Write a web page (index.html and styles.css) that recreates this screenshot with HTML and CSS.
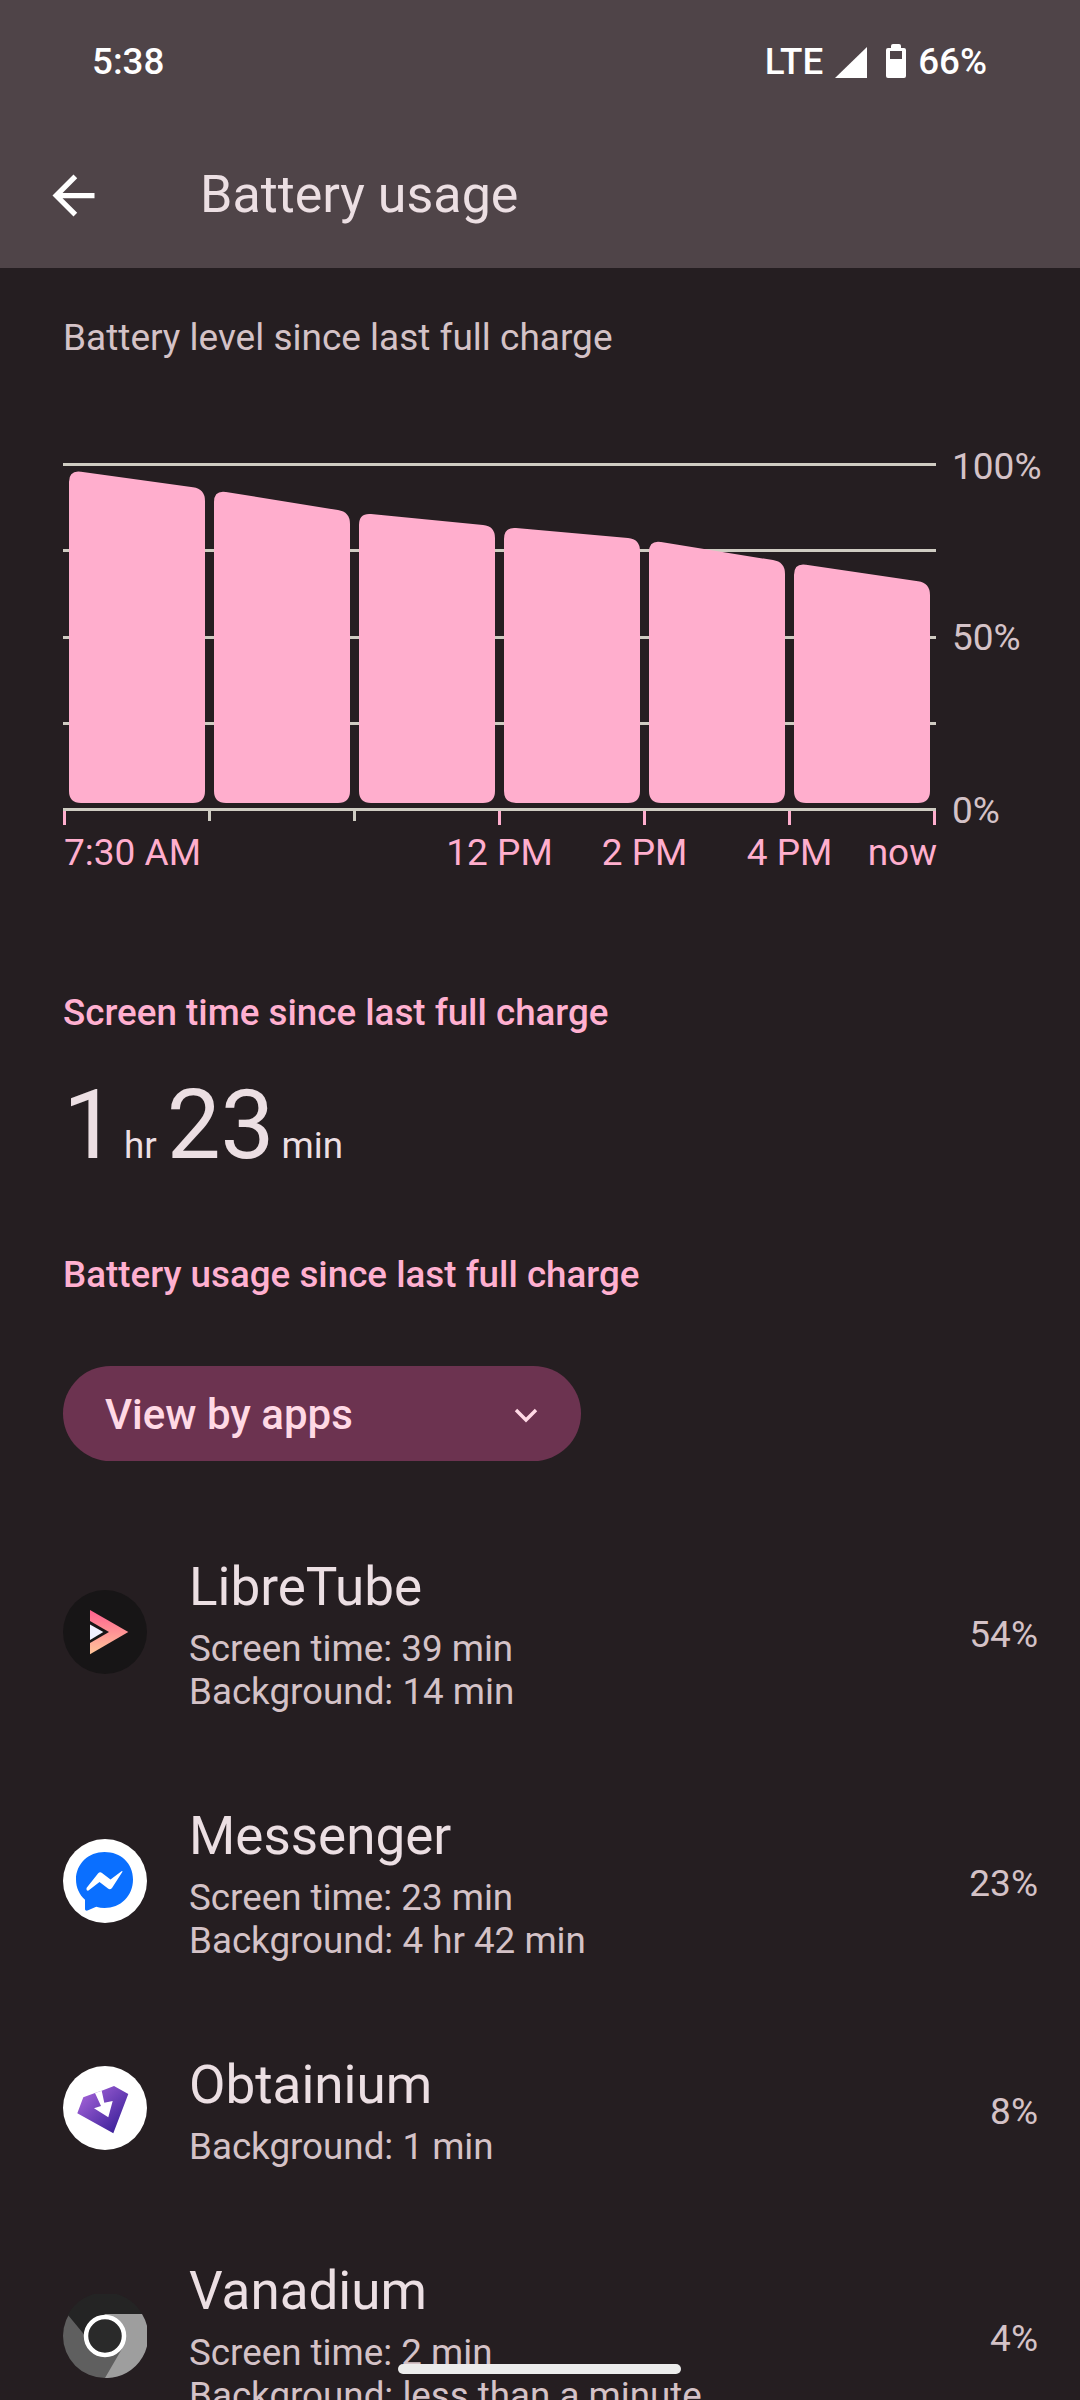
FILE: index.html
```html
<!DOCTYPE html>
<html>
  <head>
    <title>Battery usage</title>
    <link rel="stylesheet" href="styles.css">
  </head>
  <body>
    <header class="top">
      <div class="status">
        <span class="clock">5:38</span>
        <div class="status-right">
          <span>LTE</span>
          <svg class="signal" width="32" height="31" viewBox="0 0 32 31"><polygon points="0,31 32,0 32,31" fill="#fff"/></svg>
          <svg class="batt" width="20" height="34" viewBox="0 0 20 34"><path fill="#fff" fill-rule="evenodd" d="M5 2q0-2 2-2h6q2 0 2 2v2h3q2 0 2 2v26q0 2-2 2H2q-2 0-2-2V6q0-2 2-2h3zM4 7v8h12V7z"/></svg>
          <span>66%</span>
        </div>
      </div>
      <div class="toolbar">
        <svg class="back" width="63" height="63" viewBox="0 0 24 24"><path fill="#fff" d="M20 11H7.83l5.59-5.59L12 4l-8 8 8 8 1.41-1.41L7.83 13H20v-2z"/></svg>
        <h1>Battery usage</h1>
      </div>
    </header>

    <p class="chart-title">Battery level since last full charge</p>

    <!-- chart is a free canvas, 1080 wide, top at y=440 in the page -->
    <svg class="chart" width="1080" height="440" viewBox="0 440 1080 440">
      <g class="grid">
        <rect x="63" y="463" width="873" height="3"/>
        <rect x="63" y="549" width="873" height="3"/>
        <rect x="63" y="636" width="873" height="3"/>
        <rect x="63" y="722" width="873" height="3"/>
        <rect x="63" y="808" width="873" height="3"/>
        <rect x="208" y="808" width="3" height="13"/>
        <rect x="353" y="808" width="3" height="13"/>
      </g>
      <g class="ticks">
        <rect x="63" y="811" width="3" height="14"/>
        <rect x="498" y="811" width="3" height="14"/>
        <rect x="643" y="811" width="3" height="14"/>
        <rect x="788" y="811" width="3" height="14"/>
        <rect x="933" y="811" width="3" height="14"/>
      </g>
      <g class="bars">
        <path d="M69 482Q69 470 81 471.7L193 487.3Q205 489 205 501V791Q205 803 193 803H81Q69 803 69 791Z"/>
        <path d="M214 502Q214 490 226 491.9L338 510.1Q350 512 350 524V791Q350 803 338 803H226Q214 803 214 791Z"/>
        <path d="M359 525Q359 513 371 514.1L483 524.9Q495 526 495 538V791Q495 803 483 803H371Q359 803 359 791Z"/>
        <path d="M504 539Q504 527 516 528.1L628 537.9Q640 539 640 551V791Q640 803 628 803H516Q504 803 504 791Z"/>
        <path d="M649 552Q649 540 661 541.9L773 560.1Q785 562 785 574V791Q785 803 773 803H661Q649 803 649 791Z"/>
        <path d="M794 575Q794 563 806 564.8L918 581.2Q930 583 930 595V791Q930 803 918 803H806Q794 803 794 791Z"/>
      </g>
      <g class="y-labels">
        <text x="952" y="479">100%</text>
        <text x="952" y="650">50%</text>
        <text x="952" y="823">0%</text>
      </g>
      <g class="x-labels">
        <text x="64" y="865">7:30 AM</text>
        <text x="499.5" y="865" text-anchor="middle">12 PM</text>
        <text x="644.5" y="865" text-anchor="middle">2 PM</text>
        <text x="789.5" y="865" text-anchor="middle">4 PM</text>
        <text x="937" y="865" text-anchor="end">now</text>
      </g>
    </svg>

    <h2 class="section screen-head">Screen time since last full charge</h2>
    <div class="total">
      <span class="big">1</span><span class="unit">hr</span><span class="big">23</span><span class="unit">min</span>
    </div>

    <h2 class="section usage-head">Battery usage since last full charge</h2>

    <div class="pill">
      <span>View by apps</span>
      <svg width="24" height="16" viewBox="0 0 24 16"><path d="M2 3l10 10L22 3" fill="none" stroke="#ffd9e5" stroke-width="3.4"/></svg>
    </div>

    <ul class="apps">
      <li class="app">
        <svg class="icon" width="84" height="84" viewBox="0 0 84 84">
          <defs>
            <linearGradient id="lt" x1="0" y1="0" x2="0" y2="1">
              <stop offset="0" stop-color="#ff5f8f"/>
              <stop offset="1" stop-color="#ffc79a"/>
            </linearGradient>
          </defs>
          <circle cx="42" cy="42" r="42" fill="#171516"/>
          <polygon points="27,20 65.300,42 27,64.300" fill="url(#lt)"/>
          <polygon points="27,31 46,42 27,53" fill="#171516"/>
          <polygon points="27,34.500 40.300,42 27,50" fill="#f1f0ff"/>
        </svg>
        <div class="app-text">
          <div class="app-name">LibreTube</div>
          <div class="app-sub">Screen time: 39 min</div>
          <div class="app-sub">Background: 14 min</div>
        </div>
        <span class="pct">54%</span>
      </li>
      <li class="app">
        <svg class="icon" width="84" height="84" viewBox="0 0 84 84">
          <circle cx="42" cy="42" r="42" fill="#fff"/>
          <path fill="#0a6fff" d="M41.500 13C25.500 13 13 24.800 13 40.500c0 8.200 3.400 15.300 9 20.200V70c0 1.300 1.300 2.100 2.500 1.600l8.700-3.800c2.600.8 5.400 1.200 8.300 1.200 16 0 28.500-11.800 28.500-28.500S57.500 13 41.500 13z"/>
          <path fill="#fff" d="M23.500 49L35 34.500q1.800-2 4-.6L47.500 40.500L58.500 32.300q1.400-.7.8.8L49 49q-1.800 2-4 .6L36.500 43L25.500 51.500q-2.500.8-2-2.500z"/>
        </svg>
        <div class="app-text">
          <div class="app-name">Messenger</div>
          <div class="app-sub">Screen time: 23 min</div>
          <div class="app-sub">Background: 4 hr 42 min</div>
        </div>
        <span class="pct">23%</span>
      </li>
      <li class="app">
        <svg class="icon" width="84" height="84" viewBox="0 0 84 84">
          <defs>
            <linearGradient id="ob" x1="0" y1="0" x2="1" y2="1">
              <stop offset="0.1" stop-color="#a463d8"/>
              <stop offset="1" stop-color="#2b1690"/>
            </linearGradient>
          </defs>
          <circle cx="42" cy="42" r="42" fill="#fff"/>
          <polygon points="14.300,47.300 20.300,31.300 32,27 38.700,24.700 51,20 65.300,28 50.300,67.300" fill="url(#ob)"/>
          <polygon points="32,27 38.700,24.700 41.300,36.700 49.700,35 45.300,51.300 31,42.300 38,40" fill="#fff"/>
        </svg>
        <div class="app-text">
          <div class="app-name">Obtainium</div>
          <div class="app-sub">Background: 1 min</div>
        </div>
        <span class="pct">8%</span>
      </li>
      <li class="app">
        <svg class="icon" width="84" height="84" viewBox="0 0 84 84">
          <circle cx="42" cy="42" r="42" fill="#5f5f5f"/>
          <path fill="#9e9e9e" d="M42 20H79A42 42 0 0 1 42 84L60 53z"/>
          <path fill="#242424" d="M5 21A42 42 0 0 1 79 20H42L30 30L24 44z"/>
          <circle cx="42" cy="42" r="19" fill="#2a2a2a" stroke="#fff" stroke-width="4.500"/>
        </svg>
        <div class="app-text">
          <div class="app-name">Vanadium</div>
          <div class="app-sub">Screen time: 2 min</div>
          <div class="app-sub">Background: less than a minute</div>
        </div>
        <span class="pct">4%</span>
      </li>
    </ul>

    <div class="home-bar"></div>
  </body>
</html>
```

FILE: styles.css
```css
html, body {
  margin: 0;
  padding: 0;
}
body {
  position: relative;
  width: 1080px;
  height: 2400px;
  overflow: hidden;
  background: #251e21;
  color: #ecdfe3;
  font-family: Roboto, "Noto Sans", sans-serif;
}
h1, h2, p, ul {
  margin: 0;
  padding: 0;
  font-weight: 400;
}

/**** top bar ****/
.top {
  height: 268px;
  background: #4f4448;
}
.status {
  display: flex;
  justify-content: space-between;
  align-items: center;
  height: 122px;
  padding: 0 93px 0 92px;
  color: #fff;
  font-size: 36.75px;
  font-weight: 500;
}
.status-right {
  display: flex;
  align-items: center;
}
.signal {
  margin-left: 12px;
  margin-top: 3px;
}
.batt {
  margin-left: 19px;
  margin-right: 12px;
}
.toolbar {
  display: flex;
  align-items: center;
  height: 146px;
  padding-left: 42px;
}
.toolbar h1 {
  margin: 0 0 2px 95px;
  font-size: 52px;
}

/**** chart ****/
.chart-title {
  height: 172px;
  padding: 48px 63px 0;
  box-sizing: border-box;
  color: #d4c2c7;
  font-size: 37px;
  line-height: 44px;
}
.chart {
  display: block;
}
.grid rect {
  fill: #cfccc2;
}
.ticks rect {
  fill: #ffaecd;
}
.bars path {
  fill: #ffaecd;
}
.y-labels text {
  fill: #d4c2c7;
  font-size: 37px;
}
.x-labels text {
  fill: #ffaecd;
  font-size: 37px;
}

/**** summary ****/
.section {
  padding: 0 63px;
  color: #ffb0d0;
  font-size: 36.75px;
  font-weight: 500;
  line-height: 44px;
}
.screen-head {
  margin-top: 111px;
}
.total {
  display: flex;
  align-items: baseline;
  height: 110px;
  margin-top: 35px;
  padding: 0 63px;
  line-height: 110px;
}
.big {
  font-size: 96px;
  font-weight: 400;
}
.unit {
  margin: 0 10px 0 7px;
  font-size: 36.75px;
}
.usage-head {
  margin-top: 73px;
}

/**** spinner ****/
.pill {
  display: flex;
  justify-content: space-between;
  align-items: center;
  box-sizing: border-box;
  width: 518px;
  height: 95px;
  margin: 69px 0 0 63px;
  padding: 2px 43px 0 42px;
  border-radius: 48px;
  background: #6c3350;
  color: #ffd9e5;
  font-size: 42px;
  font-weight: 500;
}

/**** app rows ****/
.apps {
  margin-top: 49px;
  list-style: none;
}
.app {
  display: flex;
  align-items: center;
  padding: 46px 42px 46px 63px;
}
.icon {
  flex: none;
  margin-bottom: 6px;
}
.app-text {
  flex: 1;
  margin-left: 42px;
}
.app-name {
  margin-bottom: 8px;
  font-size: 53px;
  line-height: 63px;
}
.app-sub {
  color: #d4c2c7;
  font-size: 36.75px;
  line-height: 43px;
}
.pct {
  color: #d4c2c7;
  font-size: 37px;
}

.home-bar {
  position: absolute;
  left: 398px;
  top: 2364px;
  width: 283px;
  height: 10px;
  border-radius: 5px;
  background: #ececec;
}
```
